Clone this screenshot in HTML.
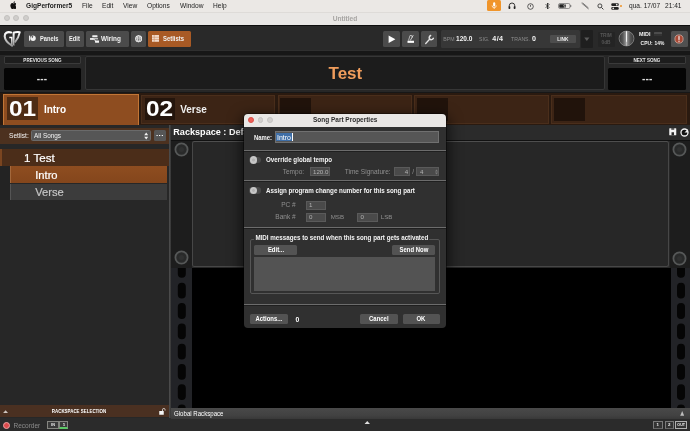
<!DOCTYPE html>
<html>
<head>
<meta charset="utf-8">
<title>Gig Performer</title>
<style>
html,body{margin:0;padding:0;}
body{width:690px;height:431px;overflow:hidden;background:#272727;font-family:"Liberation Sans","DejaVu Sans",sans-serif;position:relative;-webkit-font-smoothing:antialiased;}
*{box-sizing:border-box;}
.a{position:absolute;}
.t{position:absolute;white-space:nowrap;line-height:1;}
/* mac menubar */
#menubar{left:0;top:0;width:690px;height:12px;background:#ebe8e5;}
#menubar .t{font-size:6.6px;color:#1c1c1c;top:2.6px;}
#titlebar{left:0;top:11.6px;width:690px;height:13px;background:#e9e7e5;border-top:1px solid #dedbd8;}
.tl{position:absolute;width:6.1px;height:6.1px;border-radius:50%;background:#d0cecc;border:0.5px solid #c2c0be;}
/* toolbar */
#toolbar{left:0;top:24.5px;width:690px;height:26.7px;background:#292929;border-top:1.7px solid #0e0e0e;border-bottom:1.2px solid #2f2f2f;}
.btn{position:absolute;background:#4b4b4b;border-radius:1.5px;top:30.8px;height:16.2px;}
.btn .t{color:#f2f2f2;font-size:6.8px;font-weight:bold;top:4.9px;transform:scaleX(0.84);transform-origin:0 50%;}
/* song row */
#songrow{left:0;top:51px;width:690px;height:43px;background:#272727;border-top:4.6px solid #171717;border-bottom:2px solid #171717;}
.lblbox{position:absolute;height:7.5px;background:#1d1d1d;border:0.5px solid #3a3a3a;border-radius:1px;}
.lblbox .t{font-size:5.2px;font-weight:bold;color:#e8e8e8;width:100%;text-align:center;top:1.1px;transform:scaleX(0.88);}
.blackbox{position:absolute;background:#050505;border-radius:1.5px;}
/* parts row */
#partsrow{left:0;top:93.4px;width:690px;height:31.3px;background:#2a1a10;}
.part{position:absolute;top:94.8px;height:29.1px;background:#3c2415;border:1px solid #4a2e1b;}
.part .num{position:absolute;left:3px;top:3px;width:30.5px;height:22.5px;background:#24150c;}
/* left */
#left{left:0;top:124.6px;width:168.7px;height:293.4px;background:#272727;}
/* dialog */
#dlg{left:244.2px;top:114.2px;width:202px;height:213.7px;background:#303030;border-radius:4px;box-shadow:0 0 0 0.6px rgba(0,0,0,0.7),0 5px 14px 3px rgba(0,0,0,0.6);overflow:hidden;}
#dlg .sep{position:absolute;left:0;width:100%;height:1px;background:#6c6c6c;box-shadow:0 1px 0 #1f1f1f;}
#dlg .lab{color:#f4f4f4;font-size:6.8px;font-weight:bold;transform:scaleX(0.917);transform-origin:0 50%;}
#dlg .dim{color:#8f8f8f;font-size:6.55px;}
#dlg .inp{position:absolute;background:#4a4a4a;border:0.6px solid #5a5a5a;color:#b2b2b2;font-size:6.2px;}
#dlg .b{position:absolute;background:#535353;border-radius:1.5px;height:10.2px;color:#fff;font-size:6.6px;font-weight:bold;text-align:center;line-height:10.4px;}
.sx{display:inline-block;transform:scaleX(0.9);}
.tog{position:absolute;width:11.7px;height:6.4px;border-radius:3.2px;background:#494949;}
.tog i{position:absolute;left:0.1px;top:-0.6px;width:7.6px;height:7.6px;border-radius:50%;background:radial-gradient(circle,#b2b2b2 0,#b2b2b2 20%,#c6c6c6 36%,#c6c6c6 100%);}
</style>
</head>
<body>
<div id="w" style="position:absolute;left:0;top:0;width:690px;height:431px;overflow:hidden;will-change:transform">

<!-- ===== macOS menu bar ===== -->
<div id="menubar" class="a">
  <svg class="a" style="left:9.5px;top:1.3px" width="6.8" height="8.2" viewBox="0 0 14 17"><path d="M11.6 9c0-2 1.6-2.9 1.7-3-0.9-1.4-2.4-1.6-2.9-1.6-1.2-0.1-2.4 0.7-3 0.7-0.6 0-1.6-0.7-2.6-0.7C3.4 4.5 2.1 5.3 1.4 6.5c-1.5 2.5-0.4 6.3 1 8.3 0.7 1 1.5 2.1 2.6 2.1 1 0 1.4-0.7 2.7-0.7 1.3 0 1.6 0.7 2.7 0.7 1.1 0 1.8-1 2.5-2 0.8-1.2 1.1-2.3 1.1-2.3C14 12.5 11.6 11.7 11.6 9zM9.6 3c0.6-0.7 0.9-1.6 0.8-2.6-0.8 0-1.8 0.5-2.4 1.2-0.5 0.6-1 1.6-0.8 2.5C8.1 4.2 9 3.7 9.6 3z" fill="#111"/></svg>
  <span class="t" style="left:26px;font-weight:bold">GigPerformer5</span>
  <span class="t" style="left:82px">File</span>
  <span class="t" style="left:102px">Edit</span>
  <span class="t" style="left:123px">View</span>
  <span class="t" style="left:147px">Options</span>
  <span class="t" style="left:180px">Window</span>
  <span class="t" style="left:213px">Help</span>
  <!-- right status icons -->
  <div class="a" style="left:486.7px;top:0;width:14px;height:10.8px;background:#f0952b;border-radius:1.5px"></div>
  <svg class="a" style="left:490.5px;top:1.6px" width="6.4" height="7.6" viewBox="0 0 12 14"><rect x="4" y="0.5" width="4" height="8" rx="2" fill="#fff"/><path d="M2 6.5a4 4 0 0 0 8 0M6 10.5v2.5" stroke="#fff" stroke-width="1.3" fill="none"/></svg>
  <svg class="a" style="left:508px;top:2px" width="8" height="7.5" viewBox="0 0 16 15"><path d="M2.5 10V7.5a5.5 5.5 0 0 1 11 0V10" stroke="#222" stroke-width="1.8" fill="none"/><rect x="1" y="8.5" width="3.6" height="5.5" rx="1.5" fill="#222"/><rect x="11.4" y="8.5" width="3.6" height="5.5" rx="1.5" fill="#222"/></svg>
  <svg class="a" style="left:526.8px;top:2.6px" width="7" height="7" viewBox="0 0 14 14"><circle cx="7" cy="7" r="5.6" stroke="#222" stroke-width="1.4" fill="none"/><path d="M7 3.8V7.5" stroke="#222" stroke-width="1.4"/></svg>
  <svg class="a" style="left:544.5px;top:1.8px" width="5" height="8" viewBox="0 0 10 16"><path d="M1.5 4.5L8 11 5 14V2l3 3-6.5 6.5" stroke="#222" stroke-width="1.7" fill="none"/></svg>
  <svg class="a" style="left:557.5px;top:2.8px" width="14" height="6" viewBox="0 0 28 12"><rect x="1" y="1" width="23" height="10" rx="3" stroke="#555" stroke-width="1.2" fill="none"/><rect x="2.5" y="2.5" width="13" height="7" rx="1.5" fill="#222"/><path d="M25.5 4v4" stroke="#555" stroke-width="1.6"/><path d="M14 1.5l-3 4.5h3l-2 4.5" stroke="#ebe8e5" stroke-width="1" fill="none"/></svg>
  <svg class="a" style="left:580px;top:2px" width="10" height="8" viewBox="0 0 20 16"><path d="M3 2l14 12M5 1.5l12 10.5" stroke="#444" stroke-width="1.3" fill="none"/></svg>
  <svg class="a" style="left:596.8px;top:2.7px" width="7" height="7" viewBox="0 0 14 14"><circle cx="5.8" cy="5.8" r="4" stroke="#222" stroke-width="1.6" fill="none"/><path d="M9 9l3.8 3.8" stroke="#222" stroke-width="1.8"/></svg>
  <svg class="a" style="left:610.5px;top:2.5px" width="8" height="7" viewBox="0 0 16 14"><rect x="0.5" y="0.5" width="15" height="5.6" rx="2.5" fill="#222"/><rect x="0.5" y="7.9" width="15" height="5.6" rx="2.5" fill="#222"/><circle cx="11.5" cy="3.3" r="1.7" fill="#ebe8e5"/><circle cx="4.5" cy="10.7" r="1.7" fill="#ebe8e5"/></svg>
  <div class="a" style="left:620px;top:5px;width:1.8px;height:1.8px;border-radius:50%;background:#f0952b"></div>
  <span class="t" style="left:629px">qua. 17/07</span>
  <span class="t" style="left:665px">21:41</span>
</div>

<!-- ===== window title bar ===== -->
<div id="titlebar" class="a">
  <div class="tl" style="left:3.5px;top:2.7px"></div>
  <div class="tl" style="left:13.1px;top:2.7px"></div>
  <div class="tl" style="left:22.7px;top:2.7px"></div>
  <span class="t" style="left:0;width:690px;text-align:center;top:3px;font-size:6.6px;color:#a6a4a2;font-weight:bold">Untitled</span>
</div>

<!-- ===== toolbar ===== -->
<div id="toolbar" class="a"></div>
<!-- GP logo -->
<svg class="a" style="left:0;top:26px" width="30" height="26" viewBox="0 0 30 26">
  <defs><linearGradient id="lg" x1="0" y1="0" x2="0" y2="1"><stop offset="0" stop-color="#ffffff"/><stop offset="1" stop-color="#9a9a9a"/></linearGradient></defs>
  <path d="M11.2 6.500C7.200 5.400 4.600 7 4.700 10.200 4.900 13.800 8 17.200 12 19.600" stroke="url(#lg)" stroke-width="2.1" fill="none" stroke-linecap="round"/>
  <path d="M9.300 11.500h2.500v7.200" stroke="url(#lg)" stroke-width="1.500" fill="none"/>
  <path d="M12.600 6.200L14.700 6.200 14.400 19.900 12.800 19z" fill="url(#lg)"/>
  <path d="M13.200 6.600C15.500 6 18 5.900 19.800 6.100 19.200 9.500 17.200 13.500 14.800 16.500" stroke="url(#lg)" stroke-width="1.900" fill="none" stroke-linejoin="round"/>
</svg>
<div class="btn" style="left:24.3px;width:40px">
  <svg class="a" style="left:4.5px;top:4.7px" width="6.8" height="6.4" viewBox="0 0 16 15"><rect x="0" y="1.500" width="2.600" height="12" fill="#f0f0f0"/><circle cx="9.500" cy="7.500" r="6.400" fill="#f0f0f0"/><path d="M8.500 7.500L5.500 4A5 5 0 0 1 10 2.500z" fill="#4b4b4b"/></svg>
  <span class="t" style="left:15.8px">Panels</span>
</div>
<div class="btn" style="left:66px;width:18.2px"><span class="t" style="left:3px">Edit</span></div>
<div class="btn" style="left:86.2px;width:43px">
  <svg class="a" style="left:3.4px;top:3.8px" width="9.500" height="8" viewBox="0 0 19 16"><rect x="4.500" y="0.600" width="10.500" height="4" rx="0.800" fill="#f2f2f2"/><rect x="0" y="6.200" width="6.500" height="3.400" fill="#f2f2f2"/><rect x="10" y="10.800" width="8.500" height="4.600" rx="0.800" fill="#f2f2f2"/><path d="M3 7.600h13M6 8c5 0 3 5.200 7 5.200" stroke="#f2f2f2" stroke-width="2" fill="none"/></svg>
  <span class="t" style="left:15px;transform:scaleX(0.94)">Wiring</span>
</div>
<div class="btn" style="left:131.3px;width:14.4px">
  <svg class="a" style="left:3.6px;top:4.4px" width="7.4" height="7.4" viewBox="0 0 16 16"><circle cx="8" cy="8" r="6.600" stroke="#f0f0f0" stroke-width="2.200" fill="none"/><ellipse cx="8" cy="8" rx="2.800" ry="6.600" stroke="#f0f0f0" stroke-width="1.600" fill="none"/><path d="M1.200 8h13.600M2.200 4.800h11.600M2.200 11.200h11.600" stroke="#f0f0f0" stroke-width="1.400"/></svg>
</div>
<div class="btn" style="left:147.5px;width:43.400px;background:#a85a25">
  <svg class="a" style="left:4.300px;top:4.500px" width="7.200" height="6.800" viewBox="0 0 16 15"><rect x="0" y="0" width="16" height="15" fill="#f2dccd"/><path d="M5 0v15M0 5h16M0 10h16" stroke="#c98a5e" stroke-width="1.200"/></svg>
  <span class="t" style="left:15.3px;transform:scaleX(0.87)">Setlists</span>
</div>

<div class="btn" style="left:383.2px;width:16.5px"><svg class="a" style="left:5px;top:4px" width="8" height="8.4" viewBox="0 0 8 8.4"><path d="M0.6 0.4L7.4 4.2 0.6 8z" fill="#fff"/></svg></div>
<div class="btn" style="left:402px;width:16.5px">
  <svg class="a" style="left:4px;top:3.2px" width="9" height="10" viewBox="0 0 18 20"><path d="M5 13L8 3h3.5l1 4" stroke="#d8d8d8" stroke-width="1.5" fill="none"/><path d="M8.5 13L14.5 2.5" stroke="#eee" stroke-width="1.6"/><rect x="3" y="13.5" width="13" height="4.2" fill="#fff"/></svg>
</div>
<div class="btn" style="left:420.6px;width:16.5px">
  <svg class="a" style="left:0;top:0" width="16.500" height="16.200" viewBox="0 0 16.500 16.200"><path d="M4.700 12.500L8.800 8" stroke="#e4e4e4" stroke-width="1.300" stroke-linecap="round"/><path d="M9.600 4.500C8.200 5.400 7.700 6.900 8.700 8.100 9.900 9.200 11.500 8.700 12.300 7.300" stroke="#e4e4e4" stroke-width="1.500" fill="none" stroke-linecap="round"/></svg>
</div>
<!-- BPM panel -->
<div class="a" style="left:440.7px;top:30.200px;width:139px;height:17.400px;background:#373737;border-radius:1.5px"></div>
<span class="t" style="left:443.3px;top:37.3px;font-size:5.2px;color:#8c8c8c">BPM</span>
<span class="t" style="left:456px;top:35.8px;font-size:7.1px;font-weight:bold;color:#f4f4f4;transform:scaleX(0.92);transform-origin:0 50%">120.0</span>
<span class="t" style="left:479px;top:37.3px;font-size:5.2px;color:#8c8c8c">SIG.</span>
<span class="t" style="left:492.2px;top:35.8px;font-size:7.1px;letter-spacing:0.5px;font-weight:bold;color:#f4f4f4">4/4</span>
<span class="t" style="left:511px;top:37.3px;font-size:5.2px;color:#8c8c8c">TRANS.</span>
<span class="t" style="left:532px;top:35.8px;font-size:7.1px;font-weight:bold;color:#f4f4f4">0</span>
<div class="a" style="left:550.3px;top:35px;width:25.7px;height:8px;background:#4d4d4d;border-radius:1px"></div>
<span class="t" style="left:550.3px;width:25.7px;text-align:center;top:36.8px;font-size:5.4px;font-weight:bold;color:#f0f0f0;transform:scaleX(0.88)">LINK</span>
<div class="a" style="left:581px;top:30px;width:11.8px;height:18px;background:#1f1f1f;border-radius:1px"></div>
<svg class="a" style="left:584.4px;top:36.700px" width="5.700" height="4.400" viewBox="0 0 7 5"><path d="M0.3 0.3h6.4L3.5 4.8z" fill="#5a5a5a"/></svg>
<div class="a" style="left:597.5px;top:31.5px;width:17px;height:15.5px;background:#242424;border-radius:1px"></div>
<span class="t" style="left:597.5px;width:17px;text-align:center;top:33.8px;font-size:4.8px;font-weight:bold;color:#565656">TRIM</span>
<span class="t" style="left:597.5px;width:17px;text-align:center;top:41.4px;font-size:4.8px;font-weight:bold;color:#565656">0dB</span>
<!-- knob -->
<svg class="a" style="left:617.8px;top:30.3px" width="17" height="17" viewBox="0 0 34 34">
  <defs><linearGradient id="kg" x1="0" y1="0" x2="1" y2="0"><stop offset="0" stop-color="#363636"/><stop offset="0.25" stop-color="#565656"/><stop offset="0.43" stop-color="#8a8a8a"/><stop offset="0.5" stop-color="#bcbcbc"/><stop offset="0.57" stop-color="#8a8a8a"/><stop offset="0.75" stop-color="#565656"/><stop offset="1" stop-color="#363636"/></linearGradient></defs>
  <circle cx="17" cy="17" r="16.4" fill="#141414"/>
  <circle cx="17" cy="17" r="15" fill="url(#kg)" stroke="#a2a2a2" stroke-width="1.4"/>
  <path d="M17 2.500v21" stroke="#fff" stroke-width="1.700"/>
</svg>
<span class="t" style="left:639px;top:31.8px;font-size:5.4px;font-weight:bold;color:#f4f4f4">MIDI</span>
<div class="a" style="left:654px;top:32.3px;width:8.3px;height:4.2px;background:#4c4c4c;border-radius:0.5px"></div>
<div class="a" style="left:654px;top:33.5px;width:8.3px;height:0.6px;background:#333"></div>
<div class="a" style="left:654px;top:34.9px;width:8.3px;height:0.6px;background:#333"></div>
<span class="t" style="left:640.6px;top:41.9px;font-size:4.9px;font-weight:bold;color:#f4f4f4">CPU:</span>
<span class="t" style="left:654.5px;top:41.9px;font-size:4.9px;font-weight:bold;color:#f4f4f4">14%</span>
<div class="btn" style="left:671.2px;width:16.4px;top:30.7px;height:16.3px;background:#505050">
  <svg class="a" style="left:3.3px;top:3.1px" width="10" height="10" viewBox="0 0 20 20"><circle cx="10" cy="10" r="8.2" fill="#a94733" stroke="#d6aea2" stroke-width="1.500"/><rect x="8.9" y="4.2" width="2.2" height="7.6" fill="#fff"/><rect x="8.9" y="13.3" width="2.2" height="2.4" fill="#fff"/></svg>
</div>

<!-- ===== song row ===== -->
<div id="songrow" class="a"></div>
<div class="lblbox" style="left:3.5px;top:56px;width:77px"><span class="t">PREVIOUS SONG</span></div>
<div class="blackbox" style="left:3.5px;top:67.5px;width:77px;height:22.8px"></div>
<span class="t" style="left:3.5px;width:77px;text-align:center;top:74.2px;font-size:10px;letter-spacing:0.2px;color:#ddd;font-weight:bold">---</span>
<div class="a" style="left:84.6px;top:56.2px;width:520.8px;height:34px;background:#1c1c1c;border:0.6px solid #363636;border-radius:2px"></div>
<span class="t" style="left:84.6px;width:520.8px;text-align:center;top:64.9px;font-size:16.2px;font-weight:bold;color:#f09d5c;transform:scaleX(1.05)">Test</span>
<div class="lblbox" style="left:608.3px;top:56.1px;width:77.8px"><span class="t">NEXT SONG</span></div>
<div class="blackbox" style="left:608.3px;top:67.6px;width:77.8px;height:22.3px"></div>
<span class="t" style="left:608.3px;width:77.8px;text-align:center;top:74.2px;font-size:10px;letter-spacing:0.2px;color:#ddd;font-weight:bold">---</span>

<!-- ===== song parts row ===== -->
<div id="partsrow" class="a"></div>
<div class="part" style="left:2.9px;top:94.1px;height:31.5px;width:136.6px;background:#8e4d20;border:1.4px solid #c27636">
  <div class="num" style="left:3.6px;top:2.2px;background:#4e2c14"></div>
  <span class="t" style="left:5.6px;top:3.3px;font-size:21.6px;font-weight:bold;color:#fff;transform:scaleX(1.13);transform-origin:0 50%">01</span>
  <span class="t" style="left:40px;top:9.6px;font-size:10px;font-weight:bold;color:#fff">Intro</span>
</div>
<div class="part" style="left:141.2px;width:134px">
  <div class="num" style="left:2.5px;top:2.1px"></div>
  <span class="t" style="left:3.6px;top:2.6px;font-size:21.6px;font-weight:bold;color:#fff;transform:scaleX(1.13);transform-origin:0 50%">02</span>
  <span class="t" style="left:38px;top:9.4px;font-size:10px;font-weight:bold;color:#f0f0f0">Verse</span>
</div>
<div class="part" style="left:277.8px;width:134px"><div class="num" style="left:1.7px;top:2.6px;width:30.8px;background:#21130b"></div></div>
<div class="part" style="left:414.2px;width:134.4px"><div class="num" style="left:1.7px;top:2.6px;width:30.8px;background:#21130b"></div></div>
<div class="part" style="left:551.4px;width:135.6px"><div class="num" style="left:1.7px;top:2.6px;width:30.8px;background:#21130b"></div></div>

<!-- ===== left panel ===== -->
<div id="left" class="a"></div>
<div class="a" style="left:0;top:128px;width:168.7px;height:16.4px;background:#4c311f"></div>
<span class="t" style="left:9px;top:132.6px;font-size:6.6px;color:#f4f4f4">Setlist:</span>
<div class="a" style="left:31px;top:130.3px;width:119.5px;height:11.2px;background:#565656;border-radius:1.5px;border:0.5px solid #6a6a6a"></div>
<span class="t" style="left:34px;top:132.8px;font-size:6.4px;color:#f4f4f4">All Songs</span>
<svg class="a" style="left:143.5px;top:132px" width="4.4" height="8" viewBox="0 0 4.4 8"><path d="M0.2 3.2L2.2 0.6 4.2 3.2zM0.2 4.8L2.2 7.4 4.2 4.8z" fill="#f0f0f0"/></svg>
<div class="a" style="left:154px;top:130.3px;width:11.5px;height:11.2px;background:#565656;border-radius:1.5px"></div>
<span class="t" style="left:154px;width:11.5px;text-align:center;top:129.6px;font-size:8px;font-weight:bold;color:#fff;letter-spacing:0.4px;text-indent:0.4px">...</span>

<div class="a" style="left:0;top:149.4px;width:168.5px;height:16.2px;background:#4b2d19;border-left:2.3px solid #7a4520"></div>
<span class="t" style="left:24px;top:151.9px;font-size:11.6px;color:#fff;-webkit-text-stroke:0.22px #fff">1 Test</span>
<div class="a" style="left:0;top:166.4px;width:9.8px;height:33.2px;background:#232323"></div>
<div class="a" style="left:9.8px;top:166.4px;width:157px;height:16.6px;background:linear-gradient(#8e4d20,#84461c);border-left:1.6px solid #a3683c"></div>
<span class="t" style="left:35.2px;top:169.8px;font-size:11.2px;color:#fff;-webkit-text-stroke:0.22px #fff">Intro</span>
<div class="a" style="left:9.8px;top:183.7px;width:157px;height:15.9px;background:#3c3c3c;border-left:1.6px solid #555"></div>
<span class="t" style="left:35.2px;top:186.9px;font-size:11.2px;color:#c6c6c6;-webkit-text-stroke:0.18px #c6c6c6">Verse</span>

<div class="a" style="left:0;top:405.2px;width:168.5px;height:12.3px;background:#4a3021"></div>
<span class="t" style="left:0;width:158px;text-align:center;top:408.8px;font-size:5.7px;font-weight:bold;color:#fff;transform:scaleX(0.78)">RACKSPACE SELECTION</span>
<svg class="a" style="left:2.8px;top:409.8px" width="5.2" height="3" viewBox="0 0 5 3"><path d="M0 3L2.5 0.3 5 3z" fill="#cfc6c0"/></svg>
<svg class="a" style="left:159px;top:407.5px" width="6.5" height="7" viewBox="0 0 13 14"><rect x="0.5" y="6" width="9" height="7.5" fill="#f4f4f4"/><path d="M7 6V3.5a2.6 2.6 0 0 1 5.2 0V5" stroke="#f4f4f4" stroke-width="1.5" fill="none"/></svg>

<!-- ===== divider + right area ===== -->
<div class="a" style="left:168.7px;top:124.6px;width:2.3px;height:293.4px;background:linear-gradient(90deg,#525252,#333)"></div>
<div class="a" style="left:171px;top:124.6px;width:519px;height:16.4px;background:#2b2b2b;border-bottom:1px solid #111"></div>
<span class="t" style="left:173.3px;top:127.6px;font-size:9.1px;font-weight:bold;color:#fff">Rackspace : Default</span>
<svg class="a" style="left:669px;top:128px" width="7.5" height="7.5" viewBox="0 0 15 15"><rect x="0.5" y="0.5" width="14" height="14" rx="1" fill="#f2f2f2"/><rect x="5" y="8.5" width="5" height="6" fill="#2c2c2c"/><rect x="4.5" y="0.5" width="6" height="2.8" fill="#2c2c2c"/></svg>
<svg class="a" style="left:679.5px;top:127.5px" width="9" height="9" viewBox="0 0 18 18"><circle cx="9" cy="9" r="7" stroke="#f2f2f2" stroke-width="2.6" fill="#111"/><path d="M9 9L16 2v7z" fill="#f2f2f2"/></svg>
<!-- rails upper -->
<div class="a" style="left:171px;top:141px;width:21px;height:127px;background:#1d1d1d"></div>
<div class="a" style="left:669.5px;top:141px;width:20.5px;height:127px;background:#1d1d1d"></div>
<!-- rack panel -->
<div class="a" style="left:192px;top:140.600px;width:476.800px;height:126.700px;background:#272727;border:0.8px solid #474747;border-top-color:#4e4e4e;border-radius:2.5px"></div>
<!-- screws -->
<svg class="a" style="left:174.2px;top:141.7px" width="15" height="15" viewBox="0 0 15 15"><circle cx="7.500" cy="7.500" r="6.100" fill="#292a2a" stroke="#565858" stroke-width="1.800"/><circle cx="7.500" cy="7.500" r="2.500" fill="#303131"/></svg>
<svg class="a" style="left:174.2px;top:250.4px" width="15" height="15" viewBox="0 0 15 15"><circle cx="7.500" cy="7.500" r="6.100" fill="#292a2a" stroke="#565858" stroke-width="1.800"/><circle cx="7.500" cy="7.500" r="2.500" fill="#303131"/></svg>
<svg class="a" style="left:672.3px;top:141.6px" width="15" height="15" viewBox="0 0 15 15"><circle cx="7.500" cy="7.500" r="6.100" fill="#292a2a" stroke="#565858" stroke-width="1.800"/><circle cx="7.500" cy="7.500" r="2.500" fill="#303131"/></svg>
<svg class="a" style="left:672.3px;top:250.5px" width="15" height="15" viewBox="0 0 15 15"><circle cx="7.500" cy="7.500" r="6.100" fill="#292a2a" stroke="#565858" stroke-width="1.800"/><circle cx="7.500" cy="7.500" r="2.500" fill="#303131"/></svg>
<!-- lower black area with rails -->
<div class="a" style="left:171px;top:267.5px;width:519px;height:140px;background:#000"></div>
<svg class="a" style="left:171px;top:267.5px" width="21" height="140" viewBox="0 0 21 140">
  <rect x="0" y="0" width="21" height="140" fill="#222327"/>
  <rect x="6.8" y="-6" width="8" height="15.8" rx="4" fill="#050505"/>
  <rect x="6.8" y="14.8" width="8" height="15.8" rx="4" fill="#050505"/>
  <rect x="6.8" y="35.1" width="8" height="15.8" rx="4" fill="#050505"/>
  <rect x="6.8" y="55.4" width="8" height="15.8" rx="4" fill="#050505"/>
  <rect x="6.8" y="75.7" width="8" height="15.8" rx="4" fill="#050505"/>
  <rect x="6.8" y="96" width="8" height="15.8" rx="4" fill="#050505"/>
  <rect x="6.8" y="116.3" width="8" height="15.8" rx="4" fill="#050505"/>
  <rect x="6.8" y="136.6" width="8" height="15.8" rx="4" fill="#050505"/>
</svg>
<svg class="a" style="left:670.5px;top:267.5px" width="19.5" height="140" viewBox="0 0 19.5 140">
  <rect x="0" y="0" width="19.5" height="140" fill="#222327"/>
  <rect x="6" y="-6" width="8" height="15.8" rx="4" fill="#050505"/>
  <rect x="6" y="14.8" width="8" height="15.8" rx="4" fill="#050505"/>
  <rect x="6" y="35.1" width="8" height="15.8" rx="4" fill="#050505"/>
  <rect x="6" y="55.4" width="8" height="15.8" rx="4" fill="#050505"/>
  <rect x="6" y="75.7" width="8" height="15.8" rx="4" fill="#050505"/>
  <rect x="6" y="96" width="8" height="15.8" rx="4" fill="#050505"/>
  <rect x="6" y="116.3" width="8" height="15.8" rx="4" fill="#050505"/>
  <rect x="6" y="136.6" width="8" height="15.8" rx="4" fill="#050505"/>
</svg>
<!-- global rackspace bar -->
<div class="a" style="left:171px;top:407.6px;width:519px;height:11.3px;background:linear-gradient(#494949,#424242 65%,#393939)"></div>
<span class="t" style="left:174px;top:410.700px;font-size:6.900px;color:#fff;transform:scaleX(0.885);transform-origin:0 50%">Global Rackspace</span>
<svg class="a" style="left:680px;top:411.2px" width="4.4" height="4.8" viewBox="0 0 5 6"><path d="M0 6L2.5 0 5 6z" fill="#bdbdbd"/></svg>

<!-- ===== status bar ===== -->
<div class="a" style="left:0;top:418px;width:171px;height:13px;background:#2b2b2b"></div>
<div class="a" style="left:171px;top:418.8px;width:519px;height:12.2px;background:#2b2b2b"></div>
<div class="a" style="left:2.7px;top:421.9px;width:7.4px;height:7.4px;border-radius:50%;background:#dc4a4c;border:1.3px solid #eca4a4"></div>

<span class="t" style="left:13.5px;top:422.6px;font-size:6.5px;color:#8c8c8c">Recorder</span>
<div class="a" style="left:47px;top:421.3px;width:11.6px;height:7.4px;border:0.8px solid #858580;background:#3a3a3a"></div>
<span class="t" style="left:47px;width:12px;text-align:center;top:424.4px;font-size:3.8px;font-weight:bold;color:#eee">IN</span>
<div class="a" style="left:59.4px;top:421.2px;width:9px;height:7.8px;border:0.8px solid #858580;background:#3a3a3a;border-bottom:2px solid #5cc866"></div>
<span class="t" style="left:59.4px;width:9px;text-align:center;top:423.2px;font-size:4.4px;font-weight:bold;color:#eee">1</span>
<svg class="a" style="left:363.5px;top:420.5px" width="6.5" height="3.6" viewBox="0 0 6.5 3.6"><path d="M0 3.6L3.25 0 6.5 3.6z" fill="#e0e0e0"/></svg>
<div class="a" style="left:653px;top:421px;width:9.6px;height:7.8px;border:0.8px solid #7a7a7a;background:#333;border-bottom:1.6px solid #666"></div>
<span class="t" style="left:653px;width:9.6px;text-align:center;top:423.4px;font-size:4.4px;font-weight:bold;color:#eee">1</span>
<div class="a" style="left:664.6px;top:421px;width:9.2px;height:7.8px;border:0.8px solid #7a7a7a;background:#333;border-bottom:1.6px solid #666"></div>
<span class="t" style="left:664.6px;width:9.2px;text-align:center;top:423.4px;font-size:4.4px;font-weight:bold;color:#eee">2</span>
<div class="a" style="left:675.3px;top:421px;width:11.7px;height:7.8px;border:0.8px solid #b0b0b0;background:#333"></div>
<span class="t" style="left:675.3px;width:11.7px;text-align:center;top:424.4px;font-size:3.6px;font-weight:bold;color:#eee">OUT</span>

<!-- ===== dialog ===== -->
<div id="dlg" class="a">
  <div class="a" style="left:0;top:0;width:100%;height:13.2px;background:#e9e7e5"></div>
  <div class="a" style="left:4px;top:3.3px;width:5.8px;height:5.8px;border-radius:50%;background:#ee5f57;border:0.4px solid #d84b43"></div>
  <div class="a" style="left:13.5px;top:3.3px;width:5.8px;height:5.8px;border-radius:50%;background:#d3d1cf;border:0.4px solid #c4c2c0"></div>
  <div class="a" style="left:22.9px;top:3.3px;width:5.8px;height:5.8px;border-radius:50%;background:#d3d1cf;border:0.4px solid #c4c2c0"></div>
  <span class="t" style="left:0;width:100%;text-align:center;top:3.1px;font-size:6.48px;font-weight:bold;color:#2e2e2e">Song Part Properties</span>

  <span class="t lab" style="left:9.8px;top:20.4px;transform:scaleX(0.87)">Name:</span>
  <div class="a" style="left:30.5px;top:17px;width:164px;height:11.4px;background:#565656;border:0.8px solid #707070"></div>
  <div class="a" style="left:32.3px;top:18.8px;width:15.2px;height:7.8px;background:#3f6fa8"></div>
  <span class="t" style="left:32.8px;top:19.5px;font-size:7px;color:#fff">Intro</span>
  <div class="a" style="left:47.5px;top:18.6px;width:0.7px;height:8.2px;background:#fff"></div>

  <div class="sep" style="top:36.2px"></div>
  <div class="tog" style="left:5.3px;top:42.5px"><i></i></div>
  <span class="t lab" style="left:21.5px;top:42.9px">Override global tempo</span>
  <span class="t dim" style="left:38.5px;top:54.6px">Tempo:</span>
  <div class="inp" style="left:65.5px;top:52.8px;width:20.5px;height:9px"><span class="t" style="left:2.3px;top:0.9px">120.0</span></div>
  <span class="t dim" style="left:100.5px;top:54.6px">Time Signature:</span>
  <div class="inp" style="left:149.5px;top:52.8px;width:16.5px;height:9px"><span class="t" style="left:10px;top:1.2px">4</span></div>
  <span class="t dim" style="left:168px;top:54.6px">/</span>
  <div class="inp" style="left:171.8px;top:52.8px;width:22.8px;height:9px"><span class="t" style="left:3px;top:1.2px">4</span>
    <svg class="a" style="left:17.8px;top:1.4px" width="3" height="6" viewBox="0 0 3 6"><path d="M0 2.4L1.5 0.4 3 2.4zM0 3.6L1.5 5.6 3 3.6z" fill="#7a7a7a"/></svg>
  </div>

  <div class="sep" style="top:66px"></div>
  <div class="tog" style="left:5.3px;top:73.3px"><i></i></div>
  <span class="t lab" style="left:21.5px;top:73.7px">Assign program change number for this song part</span>
  <span class="t dim" style="left:20px;width:31.5px;text-align:right;top:87.5px">PC #</span>
  <div class="inp" style="left:61.4px;top:86.6px;width:20.6px;height:8.8px"><span class="t" style="left:2.3px;top:0.5px">1</span></div>
  <span class="t dim" style="left:20px;width:31.5px;text-align:right;top:99.5px">Bank #</span>
  <div class="inp" style="left:61.4px;top:98.6px;width:20.6px;height:8.8px"><span class="t" style="left:2.3px;top:0.5px">0</span></div>
  <span class="t dim" style="left:86.5px;top:99.8px;font-size:6.2px">MSB</span>
  <div class="inp" style="left:112.9px;top:98.6px;width:21.3px;height:8.8px"><span class="t" style="left:2.3px;top:0.5px">0</span></div>
  <span class="t dim" style="left:136.5px;top:99.8px;font-size:6.2px">LSB</span>

  <div class="sep" style="top:112.6px"></div>
  <div class="a" style="left:5.6px;top:124.4px;width:190.4px;height:55.8px;border:0.9px solid #565656;border-radius:2px"></div>
  <span class="t lab" style="left:10px;top:121.2px;background:#303030;padding:0 1.5px">MIDI messages to send when this song part gets activated</span>
  <div class="b" style="left:10px;top:130.6px;width:42.8px"><span class="sx">Edit...</span></div>
  <div class="b" style="left:147.9px;top:130.6px;width:42.8px"><span class="sx">Send Now</span></div>
  <div class="a" style="left:9.8px;top:143.3px;width:181.5px;height:33.5px;background:#535353"></div>

  <div class="sep" style="top:189.8px"></div>
  <div class="b" style="left:6.2px;top:199.5px;width:37.3px"><span class="sx">Actions...</span></div>
  <span class="t" style="left:51.3px;top:202.5px;font-size:6.8px;font-weight:bold;color:#fff">0</span>
  <div class="b" style="left:116.3px;top:199.5px;width:37.3px"><span class="sx">Cancel</span></div>
  <div class="b" style="left:158.6px;top:199.5px;width:37.3px"><span class="sx">OK</span></div>
</div>

</div>
</body>
</html>
